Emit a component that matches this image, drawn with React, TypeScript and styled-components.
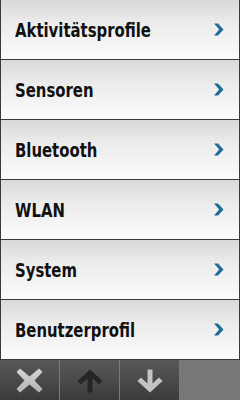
import { FC } from "react";
import styled, { createGlobalStyle } from "styled-components";

const GlobalStyle = createGlobalStyle`
  html, body {
    margin: 0;
    padding: 0;
    width: 240px;
    height: 400px;
    overflow: hidden;
    background: #ffffff;
  }
`;

const items = [
  "Aktivitätsprofile",
  "Sensoren",
  "Bluetooth",
  "WLAN",
  "System",
  "Benutzerprofil",
];

const Screen = styled.div`
  width: 240px;
  height: 400px;
  display: flex;
  flex-direction: column;
  font-family: "DejaVu Sans Condensed", "DejaVu Sans", sans-serif;
`;

const List = styled.div`
  display: flex;
  flex-direction: column;
  border-left: 1px solid #3a3a3a;
  border-right: 1px solid #3a3a3a;
`;

const Row = styled.div`
  height: 59px;
  display: flex;
  align-items: center;
  justify-content: space-between;
  padding: 0 15px 0 14px;
  background: linear-gradient(to bottom, #d9d9d9 0%, #ececec 40%, #fbfbfb 100%);
  border-bottom: 1px solid #383838;
`;

const Label = styled.span`
  display: inline-block;
  font-size: 19px;
  font-weight: bold;
  color: #111111;
  white-space: nowrap;
  transform: scaleX(0.87);
  transform-origin: left center;
`;

const Toolbar = styled.div`
  height: 41px;
  display: flex;
  background: #777777;
`;

const ToolButton = styled.div`
  width: 59px;
  height: 41px;
  display: flex;
  align-items: center;
  justify-content: center;
  background: linear-gradient(to bottom, #585858 0%, #4a4a4a 50%, #3a3a3a 100%);
  border-right: 1px solid #7a7a7a;
`;

const Filler = styled.div`
  flex: 1;
  background: #777777;
`;

const Chevron: FC = () => (
  <svg width="11" height="13" viewBox="0 0 11 13">
    <path d="M1 0.5 L5 0.5 L10.5 6.5 L5 12.5 L1 12.5 L6.2 6.5 Z" fill="#1f6b9b" />
  </svg>
);

const CloseIcon: FC = () => (
  <svg width="27" height="25" viewBox="0 0 27 25">
    <defs>
      <linearGradient id="xg" x1="0" y1="0" x2="0" y2="1">
        <stop offset="0" stopColor="#d6d6d6" />
        <stop offset="1" stopColor="#b4b4b4" />
      </linearGradient>
    </defs>
    <path
      d="M4 0.5 L13.5 8.5 L23 0.5 L26.5 4 L18.5 12.5 L26.5 21 L23 24.5 L13.5 16.5 L4 24.5 L0.5 21 L8.5 12.5 L0.5 4 Z"
      fill="url(#xg)"
    />
  </svg>
);

const ArrowIcon: FC<{ down?: boolean; color: string }> = ({ down, color }) => (
  <svg
    width="26"
    height="24"
    viewBox="0 0 26 24"
    style={down ? { transform: "rotate(180deg)" } : undefined}
  >
    <path
      d="M13 0.5 L25.5 12 L22 15.5 L15.5 9.5 L15.5 23.5 L10.5 23.5 L10.5 9.5 L4 15.5 L0.5 12 Z"
      fill={color}
    />
  </svg>
);

const App: FC = () => (
  <>
    <GlobalStyle />
    <Screen>
      <List>
        {items.map((item) => (
          <Row key={item}>
            <Label>{item}</Label>
            <Chevron />
          </Row>
        ))}
      </List>
      <Toolbar>
        <ToolButton>
          <CloseIcon />
        </ToolButton>
        <ToolButton>
          <ArrowIcon color="#262626" />
        </ToolButton>
        <ToolButton>
          <ArrowIcon down color="#c4c4c4" />
        </ToolButton>
        <Filler />
      </Toolbar>
    </Screen>
  </>
);

export default App;
